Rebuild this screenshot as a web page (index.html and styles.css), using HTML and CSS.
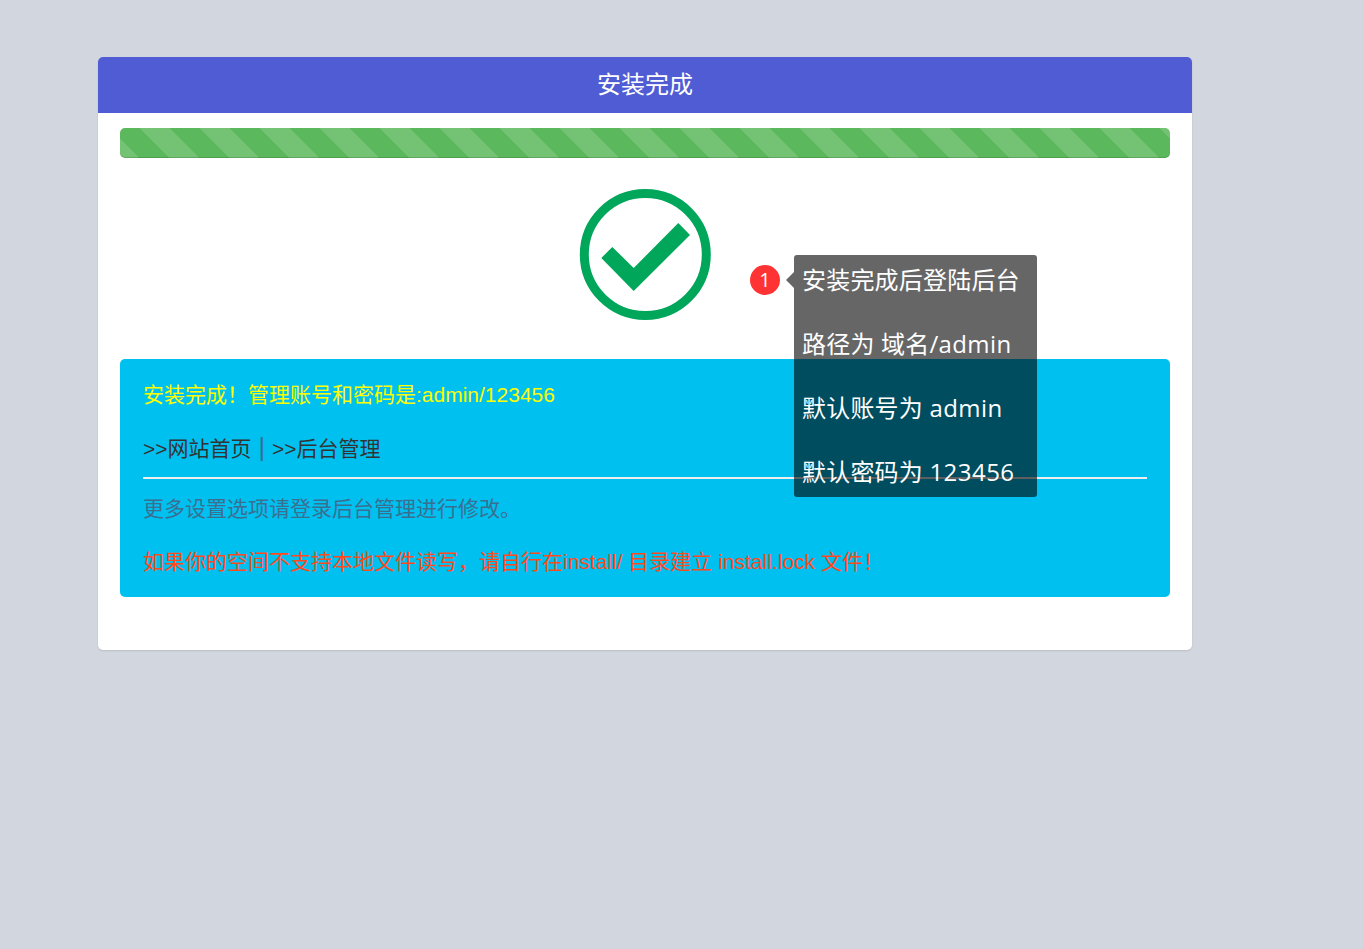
FILE: index.html
```html
<!DOCTYPE html>
<html lang="zh-CN">
<head>
<meta charset="utf-8">
<title>安装完成</title>
<link rel="stylesheet" href="styles.css">
</head>
<body>
<main class="card">
  <header class="card-head">安装完成</header>
  <div class="card-body">
    <div class="progress"></div>
    <div class="result">
      <svg class="check" width="132" height="132" viewBox="0 0 132 132" aria-hidden="true">
        <circle cx="66.3" cy="65.5" r="61" fill="none" stroke="#00a65a" stroke-width="9"/>
        <path d="M22.3 69 33.3 58 54.7 79 99.3 34 111 46 54.7 102z" fill="#00a65a"/>
      </svg>
    </div>
    <section class="alert">
      <p class="line-done">安装完成！管理账号和密码是:admin/123456</p>
      <p class="line-links"><a href="#">&gt;&gt;网站首页</a><span class="sep">|</span><a href="#">&gt;&gt;后台管理</a></p>
      <hr class="rule">
      <p class="line-more">更多设置选项请登录后台管理进行修改。</p>
      <p class="line-warn">如果你的空间不支持本地文件读写，请自行在install/ 目录建立 install.lock 文件！</p>
    </section>
    <div class="tip-wrap">
      <span class="badge">1</span>
      <div class="tip">
        <p>安装完成后登陆后台</p>
        <p>路径为 域名/<span class="lat">admin</span></p>
        <p>默认账号为 <span class="lat">admin</span></p>
        <p>默认密码为 <span class="lat">123456</span></p>
      </div>
    </div>
  </div>
</main>
</body>
</html>
```
FILE: styles.css
```css
* { box-sizing: border-box; }
html, body { margin: 0; height: 100%; }
body {
  background: #d2d6de;
  padding: 57px 171px 0 98px;
  font-family: "Liberation Sans", "Noto Sans CJK SC", sans-serif;
  font-size: 21px;
  color: #333;
}
p { margin: 0; }
.card {
  height: 593px;
  background: #fff;
  border-radius: 5px;
  box-shadow: 0 1px 2px rgba(0, 0, 0, .12);
  overflow: hidden;
}
.card-head {
  height: 56px;
  background: #505cd4;
  color: #fff;
  font-size: 24px;
  line-height: 55px;
  text-align: center;
}
.card-body {
  position: relative;
  padding: 15px 22px 0;
}
.progress {
  height: 30px;
  border-radius: 5px;
  background-color: #5cb85c;
  background-image: linear-gradient(45deg,
    rgba(255, 255, 255, .15) 25%, transparent 25%, transparent 50%,
    rgba(255, 255, 255, .15) 50%, rgba(255, 255, 255, .15) 75%, transparent 75%);
  background-size: 60px 60px;
  background-position: 20px 0;
  box-shadow: inset 0 -1px 0 rgba(0, 0, 0, .15);
}
.result {
  display: flex;
  justify-content: center;
  padding-top: 31px;
  height: 201px;
}
.alert {
  height: 238px;
  padding: 22px 23px 23px;
  background: #00c0f0;
  border-radius: 5px;
}
.line-done { color: #ff0; line-height: 28px; }
.line-links { margin-top: 26px; line-height: 28px; }
.line-links a { color: #333; text-decoration: none; }
.sep { margin: 0 7px; color: #2f6f96; font-size: 25px; line-height: 0; }
.rule {
  height: 2px;
  margin: 14px 0 0;
  border: 0;
  background: #eee;
}
.line-more { margin-top: 16px; line-height: 28px; color: #3a6f90; }
.line-warn { margin-top: 25px; line-height: 28px; color: #ff4a1c; }
.tip-wrap {
  position: absolute;
  left: 652px;
  top: 142px;
  display: flex;
  align-items: flex-start;
}
.badge {
  width: 30px;
  height: 30px;
  margin-top: 10px;
  border-radius: 50%;
  background: #ff3333;
  color: #fff;
  font-family: "Open Sans", sans-serif;
  font-size: 20px;
  line-height: 29px;
  text-align: center;
}
.tip {
  position: relative;
  width: 243px;
  height: 242px;
  margin-left: 14px;
  padding: 9px 9px 8px 8px;
  display: flex;
  flex-direction: column;
  gap: 32px;
  background: rgba(0, 0, 0, .6);
  border-radius: 3px;
  color: #fff;
  font-family: "Open Sans", "Noto Sans CJK SC", sans-serif;
  font-size: 24px;
  letter-spacing: .2px;
  line-height: 32px;
  white-space: nowrap;
}
.lat { letter-spacing: .45px; }
.tip::before {
  content: "";
  position: absolute;
  left: -8px;
  top: 17px;
  border: 8px solid transparent;
  border-left: 0;
  border-right-color: rgba(0, 0, 0, .6);
}
```
